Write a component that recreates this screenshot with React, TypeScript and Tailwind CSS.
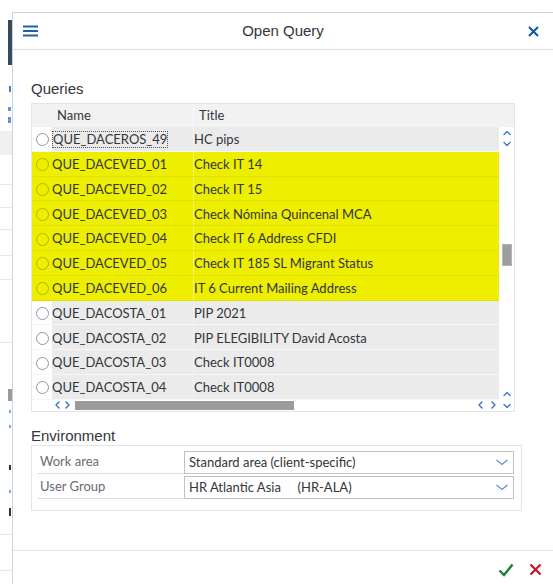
import React from "react";

type Row = { name: string; title: string; hl?: boolean; focus?: boolean };

const rows: Row[] = [
  { name: "QUE_DACEROS_49", title: "HC pips", focus: true },
  { name: "QUE_DACEVED_01", title: "Check IT 14", hl: true },
  { name: "QUE_DACEVED_02", title: "Check IT 15", hl: true },
  { name: "QUE_DACEVED_03", title: "Check Nómina Quincenal MCA", hl: true },
  { name: "QUE_DACEVED_04", title: "Check IT 6 Address CFDI", hl: true },
  { name: "QUE_DACEVED_05", title: "Check IT 185 SL Migrant Status", hl: true },
  { name: "QUE_DACEVED_06", title: "IT 6 Current Mailing Address", hl: true },
  { name: "QUE_DACOSTA_01", title: "PIP 2021" },
  { name: "QUE_DACOSTA_02", title: "PIP ELEGIBILITY David Acosta" },
  { name: "QUE_DACOSTA_03", title: "Check IT0008" },
  { name: "QUE_DACOSTA_04", title: "Check IT0008" },
];

const chevPaths: Record<string, string> = {
  up: "M2 6.5 L5 3.5 L8 6.5",
  down: "M2 3.5 L5 6.5 L8 3.5",
  left: "M6 2 L3 5 L6 8",
  right: "M4 2 L7 5 L4 8",
};

function Chev({ dir, className }: { dir: "up" | "down" | "left" | "right"; className?: string }) {
  return (
    <svg width="10" height="10" viewBox="0 0 10 10" className={className}>
      <path d={chevPaths[dir]} fill="none" stroke="currentColor" strokeWidth="1.4" strokeLinecap="round" strokeLinejoin="round" />
    </svg>
  );
}

function Radio({ hl }: { hl?: boolean }) {
  return (
    <span
      className={
        hl
          ? "block h-[13px] w-[13px] rounded-full border border-[#b3b200] bg-transparent"
          : "block h-[13px] w-[13px] rounded-full border border-[#8d99a6] bg-white"
      }
    />
  );
}

function QueryRow({ row }: { row: Row }) {
  return (
    <div
      className={
        row.hl
          ? "flex h-[24.8px] items-stretch border-b border-[#e2e200] bg-[#eeee00]"
          : "flex h-[24.8px] items-stretch border-b border-[#f6f6f6] bg-[#ebebeb]"
      }
    >
      <div className={row.hl ? "flex w-[20px] items-center justify-center pt-[2px]" : "flex w-[20px] items-center justify-center bg-white pt-[2px]"}>
        <Radio hl={row.hl} />
      </div>
      <div className="flex w-[141px] items-center pt-[2px]">
        {row.focus ? (
          <span className="border border-dotted border-[#555] leading-[15px]">{row.name}</span>
        ) : (
          <span>{row.name}</span>
        )}
      </div>
      <div className="flex flex-1 items-center border-l border-white/40 pt-[2px]">{row.title}</div>
    </div>
  );
}

function EnvRow({ label, value }: { label: string; value: string }) {
  return (
    <div className="flex h-[23px] items-stretch">
      <div className="flex w-[146px] items-center border-b border-[#dcdcdc] pl-[2px] text-[#6a6d70]">{label}</div>
      <div className="flex flex-1 items-center justify-between border border-[#c2c2c2] bg-white pl-[4px] pr-[4px]">
        <span className="whitespace-pre">{value}</span>
        <svg width="14" height="10" viewBox="0 0 14 10">
          <path d="M1.5 3 L7 7.5 L12.5 3" fill="none" stroke="#5a8fcf" strokeWidth="1.2" />
        </svg>
      </div>
    </div>
  );
}

export default function App() {
  return (
    <div className="relative h-[584px] w-[553px] overflow-hidden bg-white font-['Lato',Arial,sans-serif] text-[13px] text-[#32363a]">
      {/* page underneath the dialog */}
      <div className="flex h-full w-[12px] flex-col">
        <div className="ml-[8px] mt-[20px] h-[45px] w-[4px] bg-[#3b4a5b]" />
        <div className="ml-[9px] mt-[21px] h-[6px] w-[2px] bg-[#4a7fc4]" />
        <div className="ml-[8px] mt-[15px] h-[4px] w-[3px] bg-[#6b93c9]" />
        <div className="ml-[8px] mt-[6px] h-[6px] w-[3px] bg-[#6b93c9]" />
        <div className="mt-[8px] h-[24px] w-full bg-[#f0f0f0]" />
        <div className="mt-[29px] h-px w-full bg-[#e8e8e8]" />
        <div className="mt-[22px] h-px w-full bg-[#e8e8e8]" />
        <div className="mt-[21px] h-px w-full bg-[#e8e8e8]" />
        <div className="mt-[25px] h-px w-full bg-[#e8e8e8]" />
        <div className="mt-[23px] h-px w-full bg-[#e8e8e8]" />
        <div className="mt-[62px] h-px w-full bg-[#e8e8e8]" />
        <div className="ml-[8px] mt-[46px] h-[12px] w-[4px] bg-[#9a9a9a]" />
        <div className="ml-[9px] mt-[9px] h-[3px] w-[2px] bg-[#7ea3d4]" />
        <div className="ml-[9px] mt-[12px] h-[3px] w-[2px] bg-[#7ea3d4]" />
        <div className="ml-[9px] mt-[37px] h-[5px] w-[2px] bg-[#333]" />
        <div className="ml-[9px] mt-[20px] h-[3px] w-[2px] bg-[#7ea3d4]" />
        <div className="ml-[9px] mt-[15px] h-[8px] w-[2px] bg-[#333]" />
        <div className="mt-[18px] h-px w-full bg-[#e8e8e8]" />
        <div className="mt-[35px] h-px w-full bg-[#e8e8e8]" />
      </div>

      {/* Open Query dialog */}
      <div className="absolute left-[12px] top-[12px] flex h-[576px] w-[541px] flex-col border-l border-t border-[#c8d5e2] bg-white">
        <div className="flex h-[37px] shrink-0 items-center border-b border-[#d3dde8] pl-[10px] pr-[14px] font-['Liberation_Sans',Arial,sans-serif]">
          <svg width="15" height="12" viewBox="0 0 15 12" className="text-[#1f61ad]">
            <rect x="0" y="0.5" width="15" height="2" fill="currentColor" />
            <rect x="0" y="5" width="15" height="2" fill="currentColor" />
            <rect x="0" y="9.5" width="15" height="2" fill="currentColor" />
          </svg>
          <div className="flex-1 text-center text-[15px] text-[#32363a]">Open Query</div>
          <svg width="11" height="11" viewBox="0 0 11 11">
            <path d="M1 1 L10 10 M10 1 L1 10" stroke="#0b56a3" strokeWidth="2" />
          </svg>
        </div>

        <div className="flex flex-1 flex-col pl-[18px] pr-[19px]">
          <div className="mt-[30px] font-['Liberation_Sans',Arial,sans-serif] text-[15px] leading-[18px]">Queries</div>

          {/* queries table */}
          <div className="mt-[5px] flex w-[484px] border border-[#e4e4e4]">
            <div className="flex w-[467px] flex-col">
              <div className="flex h-[23px] items-center bg-[#f2f2f2]">
                <div className="w-[20px]" />
                <div className="w-[141px] pl-[5px]">Name</div>
                <div className="flex h-full flex-1 items-center border-l border-[#fafafa] pl-[5px]">Title</div>
              </div>
              {rows.map((r) => (
                <QueryRow key={r.name} row={r} />
              ))}
              <div className="flex h-[11px] items-center">
                <div className="w-[21px]" />
                <Chev dir="left" className="text-[#2d6fc3]" />
                <Chev dir="right" className="-ml-[1px] text-[#2d6fc3]" />
                <div className="ml-[3px] h-[9px] w-[219px] bg-[#9b9b9b]" />
                <div className="flex-1" />
                <Chev dir="left" className="text-[#2d6fc3]" />
                <Chev dir="right" className="ml-[2px] mr-[1px] text-[#2d6fc3]" />
              </div>
            </div>
            <div className="flex w-[15px] flex-col">
              <div className="h-[23px] bg-[#f2f2f2]" />
              <div className="flex flex-1 flex-col items-center pl-[1px]">
                <Chev dir="up" className="mt-[1px] text-[#3b7bcc]" />
                <Chev dir="down" className="mt-[1px] text-[#3b7bcc]" />
                <div className="mt-[95px] h-[22px] w-[10px] border border-[#b5b5b5] bg-[#9d9d9d]" />
                <div className="flex-1" />
                <Chev dir="up" className="text-[#3b7bcc]" />
                <Chev dir="down" className="mt-[2px] text-[#3b7bcc]" />
              </div>
            </div>
          </div>

          <div className="mt-[15px] font-['Liberation_Sans',Arial,sans-serif] text-[15px] leading-[18px]">Environment</div>
          <div className="flex w-[491px] flex-col gap-[2px] border border-[#e4e4e4] pb-[11px] pl-[6px] pr-[7px] pt-[5px]">
            <EnvRow label="Work area" value="Standard area (client-specific)" />
            <EnvRow label="User Group" value={"HR Atlantic Asia     (HR-ALA)"} />
          </div>
        </div>

        <div className="flex h-[38px] shrink-0 items-center justify-end gap-[15px] border-t border-[#e6e6e6] pr-[11px]">
          <svg width="16" height="14" viewBox="0 0 16 14">
            <path d="M1.5 7.5 L6 12 L14.5 1.5" fill="none" stroke="#1a7f3c" strokeWidth="2.4" />
          </svg>
          <svg width="13" height="13" viewBox="0 0 13 13">
            <path d="M1.5 1.5 L11.5 11.5 M11.5 1.5 L1.5 11.5" stroke="#c4161c" strokeWidth="2.2" />
          </svg>
        </div>
      </div>
    </div>
  );
}
